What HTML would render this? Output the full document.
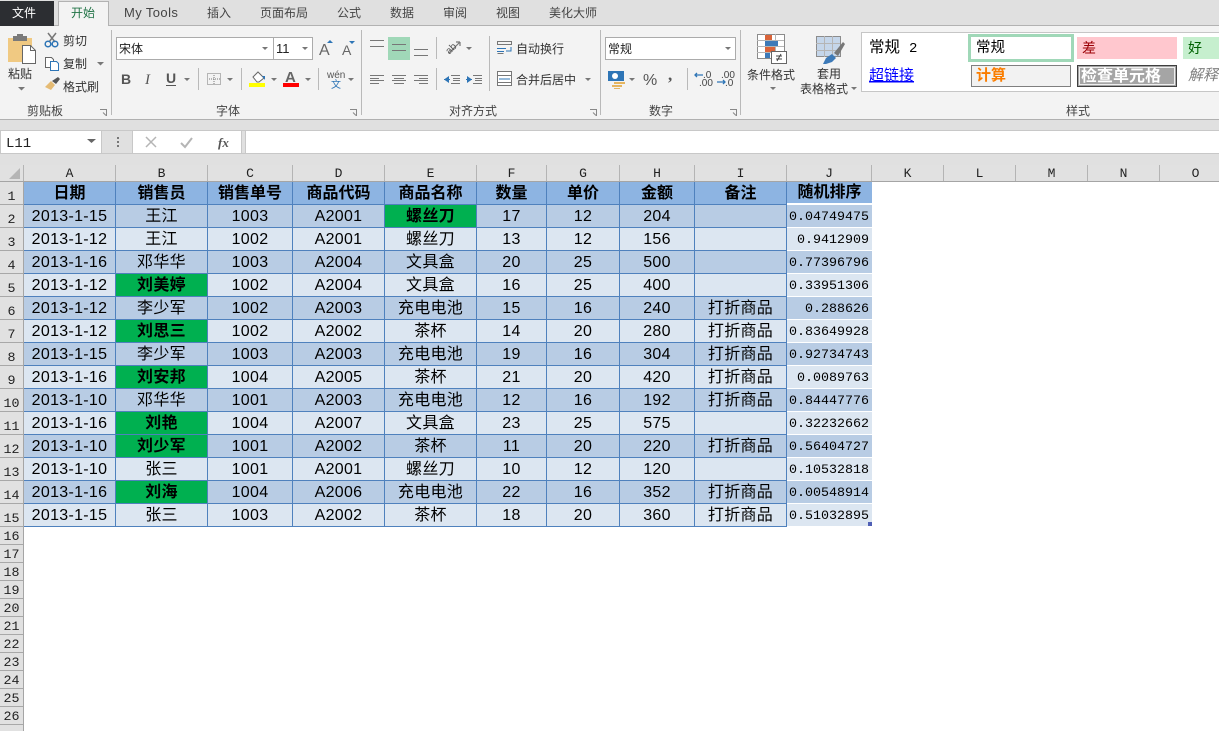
<!DOCTYPE html>
<html lang="zh">
<head>
<meta charset="utf-8">
<title>Excel</title>
<style>
html,body{margin:0;padding:0;width:1219px;height:731px;overflow:hidden;background:#fff}
body{position:relative;font-family:"Liberation Sans","Noto Sans CJK SC",sans-serif;color:#000}
svg#r{position:absolute;left:0;top:0;width:1219px;height:165px;display:block}
svg#r text{font-family:"Liberation Sans","Noto Sans CJK SC",sans-serif;font-size:12px;fill:#444}
svg#r text.m{font-family:"Liberation Mono","Noto Sans CJK SC",monospace}
table{position:absolute;left:24px;top:182px;border-collapse:separate;border-spacing:0;table-layout:fixed;width:848px}
tr{height:23px}
td{box-sizing:border-box;height:23px;padding:2px 0 0;border-right:1px solid #4f81bd;border-bottom:1px solid #4f81bd;text-align:center;vertical-align:middle;font-size:16px;line-height:16px;letter-spacing:.3px;white-space:nowrap;overflow:hidden}
tr.h td{background:#8db4e2;font-weight:bold;letter-spacing:0;padding-top:1px}
tr.d td{background:#b8cce4}
tr.l td{background:#dce6f1}
td.g{background:#00b050!important;font-weight:bold}
td.j{border:0;border-bottom:1px solid #fff;text-align:right;padding-right:3px;letter-spacing:0;font-family:"Liberation Mono",monospace;font-size:13.33px;padding-top:3px}
tr.h td.j{font-family:"Liberation Sans","Noto Sans CJK SC",sans-serif;font-size:16px;text-align:center;padding:1px 0 0;border-bottom:2px solid #fff}
.ch{position:absolute;left:0;top:165px;width:1219px;height:17px;background:#e1e1e1;border-bottom:1px solid #a5a5a5;box-sizing:border-box}
.ch div{position:absolute;top:0;height:16px;box-sizing:border-box;border-right:1px solid #b4b4b4;text-align:center;font:13px/18px "Liberation Mono",monospace;color:#222}
.rh{position:absolute;left:0;top:182px;width:24px;background:#e1e1e1;border-right:1px solid #a5a5a5;box-sizing:border-box;height:549px}
.rh div{box-sizing:border-box;width:23px;border-bottom:1px solid #a8a8a8;text-align:center;font:13.33px "Liberation Mono",monospace;color:#222;overflow:hidden}
.rh .a{height:23px;line-height:32px}
.rh .b{height:18px;line-height:22px}
.hn{position:absolute;left:868px;top:522px;width:4px;height:4px;background:#4f5fb5}
</style>
</head>
<body>
<svg id="r" viewBox="0 0 1219 165" xmlns="http://www.w3.org/2000/svg">
<rect width="1219" height="165" fill="#e0e0e0"/>
<rect y="26" width="1219" height="93" fill="#f3f3f3"/>
<rect y="25" width="1219" height="1" fill="#b2b2b2"/>
<rect y="119" width="1219" height="1" fill="#b0b0b0"/>
<rect y="130" width="1219" height="1" fill="#c8c8c8"/>
<!-- tabs -->
<rect x="0" y="1" width="54" height="25" fill="#2c2e32"/>
<text x="12" y="17" style="fill:#fff">文件</text>
<path d="M58.5 26V1.5H108.500V26" fill="#f3f3f3" stroke="#b2b2b2"/>
<rect x="59" y="25" width="49" height="2" fill="#f3f3f3"/>
<text x="71" y="17" style="fill:#217346">开始</text>
<text x="124" y="17" style="font-size:13px;letter-spacing:.4px">My Tools</text>
<text x="207" y="17">插入</text>
<text x="260" y="17">页面布局</text>
<text x="337" y="17">公式</text>
<text x="390" y="17">数据</text>
<text x="443" y="17">审阅</text>
<text x="496" y="17">视图</text>
<text x="549" y="17">美化大师</text>
<!-- group separators -->
<g fill="#b9b9b9">
<rect x="111" y="30" width="1" height="85"/><rect x="361" y="30" width="1" height="85"/>
<rect x="600" y="30" width="1" height="85"/><rect x="740" y="30" width="1" height="85"/>
<rect x="198" y="68" width="1" height="22"/><rect x="241" y="68" width="1" height="22"/><rect x="318" y="68" width="1" height="22"/>
<rect x="436" y="37" width="1" height="22"/><rect x="436" y="68" width="1" height="22"/>
<rect x="489" y="36" width="1" height="55"/><rect x="687" y="68" width="1" height="22"/>
</g>
<!-- clipboard -->
<path d="M8 38h24v24H8z" fill="#f0c982"/>
<rect x="13" y="36" width="14" height="5" fill="#7a7a7a"/><rect x="17" y="34" width="6" height="4" fill="#7a7a7a"/>
<path d="M22.500 45.500h8l5 5v13h-13z" fill="#fff" stroke="#666"/>
<path d="M30.500 45.500v5h5" fill="none" stroke="#666"/>
<text x="8" y="78" style="font-size:12px;fill:#333">粘贴</text>
<path d="M18 87h7l-3.500 3.500z" fill="#777"/>
<g fill="none" stroke-width="1.500">
<path d="M48 33l7 9M56 33l-7 9" stroke="#777"/>
<circle cx="48" cy="44" r="2.800" stroke="#2e75b6"/><circle cx="55" cy="44" r="2.800" stroke="#2e75b6"/>
</g>
<text x="63" y="45" style="fill:#333">剪切</text>
<path d="M45.500 57.500h6l2 2v8h-8z" fill="#fff" stroke="#666"/><path d="M50.500 61.500h6l2 2v7h-8z" fill="#fff" stroke="#2e75b6"/>
<text x="63" y="68" style="fill:#333">复制</text>
<path d="M97 62h7l-3.500 3.500z" fill="#777"/>
<path d="M45 87l6-6 4 4-4 5z" fill="#e5bb74"/><path d="M52 81l6-4 2 2-4 5z" fill="#555"/>
<text x="63" y="91" style="fill:#333">格式刷</text>
<text x="27" y="115">剪贴板</text>
<path d="M100 109.500h6.500v6.500M103 112.500l3 3" fill="none" stroke="#888"/>
<!-- font -->
<rect x="116.500" y="37.500" width="157" height="22" fill="#fff" stroke="#ababab"/>
<rect x="273.500" y="37.500" width="39" height="22" fill="#fff" stroke="#ababab"/>
<text x="119" y="53" style="fill:#222">宋体</text>
<text x="276" y="53" style="font-size:13px;fill:#222">11</text>
<path d="M262 47h6l-3 3zM302 47h6l-3 3z" fill="#777"/>
<text x="319" y="55" style="font-size:16px;fill:#666">A</text><path d="M327 43h6l-3-3z" fill="#2e75b6"/>
<text x="342" y="55" style="font-size:14px;fill:#666">A</text><path d="M349 41h6l-3 3z" fill="#2e75b6"/>
<text x="121" y="84" style="font-size:14px;font-weight:bold;fill:#555">B</text>
<text x="145" y="84" style="font-size:15px;font-style:italic;font-family:'Liberation Serif',serif;fill:#555">I</text>
<text x="166" y="83" style="font-size:14px;font-weight:bold;fill:#555">U</text><rect x="166" y="85" width="10" height="1" fill="#555"/>
<path d="M184 78h6l-3 3zM227 78h6l-3 3zM271 78h6l-3 3zM305 78h6l-3 3zM348 78h6l-3 3z" fill="#777"/>
<rect x="207.500" y="73.500" width="13" height="11" fill="none" stroke="#777" stroke-dasharray="1 1"/>
<path d="M207 79h14M214 73v12" stroke="#777" stroke-dasharray="1 1"/>
<path d="M253 77l5-5 6 6-5 4h-2z" fill="#fff" stroke="#666"/><path d="M262 76l3 0 0 4z" fill="#2e75b6"/>
<rect x="249" y="83" width="16" height="4" fill="#ff0"/>
<text x="285" y="82" style="font-size:15px;font-weight:bold;fill:#666">A</text>
<rect x="283" y="83" width="16" height="4" fill="#f00"/>
<text x="327" y="78" style="font-size:10px;fill:#555">wén</text>
<text x="331" y="88" style="font-size:10px;fill:#2e75b6">文</text>
<text x="216" y="115">字体</text>
<path d="M350 109.500h6.500v6.500M353 112.500l3 3" fill="none" stroke="#888"/>
<!-- align -->
<rect x="388" y="37" width="22" height="23" fill="#a0d8b8"/>
<g stroke="#777" fill="none">
<path d="M370 40.500h14M370 46.500h14"/>
<path d="M392 44.500h14M392 50.500h14"/>
<path d="M414 49.500h14M414 55.500h14"/>
<path d="M370 75.500h14M370 78.500h9M370 80.500h14M370 83.500h9"/>
<path d="M392 75.500h14M394 78.500h10M392 80.500h14M394 83.500h10"/>
<path d="M414 75.500h14M419 78.500h9M414 80.500h14M419 83.500h9"/>
<path d="M451 75.500h9M453 78.500h7M453 80.500h7M451 83.500h9M473 75.500h9M475 78.500h7M475 80.500h7M473 83.500h9"/>
<path d="M449 53l11-11M460 42h-4M460 42v4" stroke-width="1.200"/>
</g>
<path d="M444 79.500l5-3.500v7zM472 79.500l-5-3.500v7z" fill="#2e75b6"/>
<path d="M444 79.500h6M466 79.500h6" stroke="#2e75b6"/>
<text x="444" y="52" transform="rotate(-45 450 47)" style="font-size:10px;fill:#555">ab</text>
<path d="M466 47h6l-3 3z" fill="#777"/>
<path d="M497.500 41.500h14v3h-14zM497.500 53.500h6" fill="none" stroke="#777"/>
<path d="M497 48.500h9M497 51.500h7" stroke="#2e75b6"/>
<path d="M511 47v4h-5" fill="none" stroke="#2e75b6"/>
<text x="516" y="53" style="fill:#333">自动换行</text>
<rect x="497.500" y="71.500" width="14" height="14" fill="#fff" stroke="#777"/>
<path d="M498 75.500h13M498 82.500h13" stroke="#777"/>
<path d="M499 79h11" stroke="#2e75b6"/>
<text x="516" y="84" style="fill:#333">合并后居中</text>
<path d="M585 78h6l-3 3z" fill="#777"/>
<text x="449" y="115">对齐方式</text>
<path d="M590 109.500h6.500v6.500M593 112.500l3 3" fill="none" stroke="#888"/>
<!-- number -->
<rect x="605.500" y="37.500" width="130" height="22" fill="#fff" stroke="#ababab"/>
<text x="608" y="53" style="fill:#222">常规</text>
<path d="M725 47h6l-3 3z" fill="#777"/>
<rect x="608" y="71" width="16" height="10" fill="#2e75b6"/><circle cx="615" cy="76" r="3" fill="#fff"/>
<path d="M614 82h11v2h-11zM612 85h10v2h-10zM614 88h6v1h-6z" fill="#e5b55f"/>
<path d="M629 78h6l-3 3z" fill="#777"/>
<text x="643" y="85" style="font-size:16px;fill:#555">%</text>
<text x="668" y="80" style="font-size:17px;font-weight:bold;font-family:'Liberation Serif',serif;fill:#555">,</text>
<text x="703" y="78" style="font-size:10px;fill:#444">.0</text>
<text x="699" y="86" style="font-size:10px;fill:#444">.00</text>
<text x="721" y="78" style="font-size:10px;fill:#444">.00</text>
<text x="725" y="86" style="font-size:10px;fill:#444">.0</text>
<path d="M695 75h8M697 73l-2 2 2 2M717 82h8M723 80l2 2-2 2" fill="none" stroke="#2e75b6" stroke-width="1.300"/>
<text x="649" y="115">数字</text>
<path d="M730 109.500h6.500v6.500M733 112.500l3 3" fill="none" stroke="#888"/>
<!-- conditional -->
<rect x="757.500" y="34.500" width="27" height="24" fill="#fff" stroke="#8c8c8c"/>
<path d="M757 40.500h27M757 46.500h27M757 52.500h27M765.500 34v24M775.500 34v24" stroke="#b5b5b5"/>
<path d="M765 35h7v5h-7z" fill="#d9643a"/><path d="M765 41h13v5h-13z" fill="#3d7ab8"/><path d="M765 47h10v5h-10z" fill="#d9643a"/><path d="M765 53h5v5h-5z" fill="#3d7ab8"/>
<rect x="771.500" y="51.500" width="15" height="12" fill="#fff" stroke="#666"/>
<path d="M776 56h6M776 59h6M781 54l-4 7" stroke="#444" fill="none"/>
<text x="747" y="79" style="fill:#333">条件格式</text>
<path d="M770 87h6l-3 3z" fill="#777"/>
<!-- table format -->
<rect x="816.500" y="36.500" width="24" height="20" fill="#c5d6ea" stroke="#8c8c8c"/>
<path d="M816 43.500h24M816 50.500h24M824.500 36v21M832.500 36v21" stroke="#b5b5b5"/>
<path d="M823 64l3-6 6-4 4 4-4 4-6 2z" fill="#3d7ab8"/>
<path d="M834 53l9-11 2 2-7 12z" fill="#777"/>
<text x="817" y="78" style="fill:#333">套用</text>
<text x="800" y="93" style="fill:#333">表格格式</text>
<path d="M851 87h6l-3 3z" fill="#777"/>
<!-- styles -->
<rect x="861.500" y="32.500" width="358" height="59" fill="#fff" stroke="#c6c6c6"/>
<text x="869" y="52" style="font-size:15.500px;fill:#000">常规</text><text x="909" y="52" class="m" style="font-size:14px;fill:#000">2</text>
<rect x="969.500" y="35.500" width="103" height="25" fill="#fff" stroke="#a0d8b8" stroke-width="3"/>
<text x="976" y="52" style="font-size:14.500px;fill:#000">常规</text>
<rect x="1077" y="37" width="100" height="22" fill="#ffc7ce"/>
<text x="1082" y="53" style="font-size:14px;fill:#9c0006">差</text>
<rect x="1183" y="37" width="36" height="22" fill="#c6efce"/>
<text x="1188" y="53" style="font-size:14px;fill:#006100">好</text>
<text x="869" y="80" style="font-size:15px;fill:#0000ff;text-decoration:underline">超链接</text>
<rect x="971.500" y="65.500" width="99" height="21" fill="#f2f2f2" stroke="#7f7f7f"/>
<text x="976" y="80" style="font-size:15px;font-weight:bold;fill:#fa7d00">计算</text>
<rect x="1077.500" y="65.500" width="99" height="21" fill="#a5a5a5" stroke="#3f3f3f"/>
<rect x="1079.500" y="67.500" width="95" height="17" fill="none" stroke="#eee"/>
<text x="1081" y="81" style="font-size:16px;font-weight:bold;fill:#fff">检查单元格</text>
<text x="1188" y="80" style="font-size:15px;font-style:italic;fill:#7f7f7f">解释</text>
<text x="1066" y="115">样式</text>
<!-- formula bar -->
<rect x="0.500" y="130.500" width="101" height="23" fill="#fff" stroke="#c8c8c8"/>
<text x="6" y="147" class="m" style="font-size:14px;fill:#222">L11</text>
<path d="M87 139h9l-4.500 4z" fill="#666"/>
<path d="M117 137h2v2h-2zM117 141h2v2h-2zM117 145h2v2h-2z" fill="#777"/>
<rect x="132.500" y="130.500" width="109" height="23" fill="#fff" stroke="#c8c8c8"/>
<path d="M146 137l10 10M156 137l-10 10" stroke="#b5b5b5" stroke-width="1.500" fill="none"/>
<path d="M181 143l4 4 7-9" stroke="#b5b5b5" stroke-width="2" fill="none"/>
<text x="218" y="147" style="font-family:'Liberation Serif',serif;font-style:italic;font-weight:bold;font-size:13px;fill:#555">fx</text>
<rect x="245.500" y="130.500" width="974" height="23" fill="#fff" stroke="#c8c8c8"/>
<rect y="153" x="0" width="1219" height="1" fill="#c8c8c8"/>
</svg>

<div class="ch">
<div style="left:0;width:24px"></div>
<div style="left:24px;width:92px">A</div>
<div style="left:116px;width:92px">B</div>
<div style="left:208px;width:85px">C</div>
<div style="left:293px;width:92px">D</div>
<div style="left:385px;width:92px">E</div>
<div style="left:477px;width:70px">F</div>
<div style="left:547px;width:73px">G</div>
<div style="left:620px;width:75px">H</div>
<div style="left:695px;width:92px">I</div>
<div style="left:787px;width:85px">J</div>
<div style="left:872px;width:72px">K</div>
<div style="left:944px;width:72px">L</div>
<div style="left:1016px;width:72px">M</div>
<div style="left:1088px;width:72px">N</div>
<div style="left:1160px;width:72px">O</div>
<svg style="position:absolute;left:9px;top:3px" width="12" height="12"><path d="M11 0v11H0z" fill="#b5b5b5"/></svg>
</div>

<div class="rh">
<div class="a">1</div><div class="a">2</div><div class="a">3</div><div class="a">4</div><div class="a">5</div><div class="a">6</div><div class="a">7</div><div class="a">8</div><div class="a">9</div><div class="a">10</div><div class="a">11</div><div class="a">12</div><div class="a">13</div><div class="a">14</div><div class="a">15</div>
<div class="b">16</div><div class="b">17</div><div class="b">18</div><div class="b">19</div><div class="b">20</div><div class="b">21</div><div class="b">22</div><div class="b">23</div><div class="b">24</div><div class="b">25</div><div class="b">26</div>
</div>

<table>
<colgroup><col style="width:92px"><col style="width:92px"><col style="width:85px"><col style="width:92px"><col style="width:92px"><col style="width:70px"><col style="width:73px"><col style="width:75px"><col style="width:92px"><col style="width:85px"></colgroup>
<tr class="h"><td>日期</td><td>销售员</td><td>销售单号</td><td>商品代码</td><td>商品名称</td><td>数量</td><td>单价</td><td>金额</td><td>备注</td><td class="j">随机排序</td></tr>
<tr class="d"><td>2013-1-15</td><td>王江</td><td>1003</td><td>A2001</td><td class="g">螺丝刀</td><td>17</td><td>12</td><td>204</td><td></td><td class="j">0.04749475</td></tr>
<tr class="l"><td>2013-1-12</td><td>王江</td><td>1002</td><td>A2001</td><td>螺丝刀</td><td>13</td><td>12</td><td>156</td><td></td><td class="j">0.9412909</td></tr>
<tr class="d"><td>2013-1-16</td><td>邓华华</td><td>1003</td><td>A2004</td><td>文具盒</td><td>20</td><td>25</td><td>500</td><td></td><td class="j">0.77396796</td></tr>
<tr class="l"><td>2013-1-12</td><td class="g">刘美婷</td><td>1002</td><td>A2004</td><td>文具盒</td><td>16</td><td>25</td><td>400</td><td></td><td class="j">0.33951306</td></tr>
<tr class="d"><td>2013-1-12</td><td>李少军</td><td>1002</td><td>A2003</td><td>充电电池</td><td>15</td><td>16</td><td>240</td><td>打折商品</td><td class="j">0.288626</td></tr>
<tr class="l"><td>2013-1-12</td><td class="g">刘思三</td><td>1002</td><td>A2002</td><td>茶杯</td><td>14</td><td>20</td><td>280</td><td>打折商品</td><td class="j">0.83649928</td></tr>
<tr class="d"><td>2013-1-15</td><td>李少军</td><td>1003</td><td>A2003</td><td>充电电池</td><td>19</td><td>16</td><td>304</td><td>打折商品</td><td class="j">0.92734743</td></tr>
<tr class="l"><td>2013-1-16</td><td class="g">刘安邦</td><td>1004</td><td>A2005</td><td>茶杯</td><td>21</td><td>20</td><td>420</td><td>打折商品</td><td class="j">0.0089763</td></tr>
<tr class="d"><td>2013-1-10</td><td>邓华华</td><td>1001</td><td>A2003</td><td>充电电池</td><td>12</td><td>16</td><td>192</td><td>打折商品</td><td class="j">0.84447776</td></tr>
<tr class="l"><td>2013-1-16</td><td class="g">刘艳</td><td>1004</td><td>A2007</td><td>文具盒</td><td>23</td><td>25</td><td>575</td><td></td><td class="j">0.32232662</td></tr>
<tr class="d"><td>2013-1-10</td><td class="g">刘少军</td><td>1001</td><td>A2002</td><td>茶杯</td><td>11</td><td>20</td><td>220</td><td>打折商品</td><td class="j">0.56404727</td></tr>
<tr class="l"><td>2013-1-10</td><td>张三</td><td>1001</td><td>A2001</td><td>螺丝刀</td><td>10</td><td>12</td><td>120</td><td></td><td class="j">0.10532818</td></tr>
<tr class="d"><td>2013-1-16</td><td class="g">刘海</td><td>1004</td><td>A2006</td><td>充电电池</td><td>22</td><td>16</td><td>352</td><td>打折商品</td><td class="j">0.00548914</td></tr>
<tr class="l"><td>2013-1-15</td><td>张三</td><td>1003</td><td>A2002</td><td>茶杯</td><td>18</td><td>20</td><td>360</td><td>打折商品</td><td class="j">0.51032895</td></tr>
</table>
<div class="hn"></div>
</body>
</html>
